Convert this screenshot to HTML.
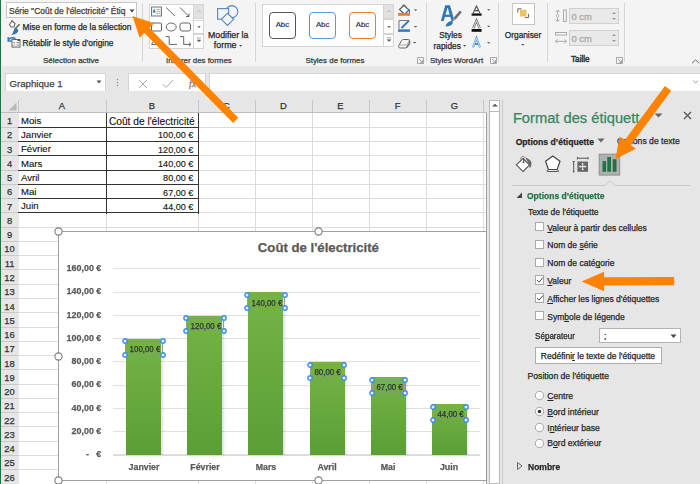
<!DOCTYPE html>
<html><head><meta charset="utf-8">
<style>
*{box-sizing:border-box;margin:0;padding:0}
html,body{width:700px;height:484px;overflow:hidden;background:#fff}
body{position:relative;font-family:"Liberation Sans",sans-serif;color:#262626}
.a{position:absolute}
.t{position:absolute;white-space:nowrap;line-height:1;-webkit-text-stroke:0.25px currentColor}
svg{position:absolute;overflow:visible}
</style></head><body>
<div class="a" style="left:0.00px;top:0.00px;width:700.00px;height:66.00px;background:#f5f4f5"></div>
<div class="a" style="left:0.00px;top:66.00px;width:700.00px;height:34.00px;background:#e6e6e6"></div>
<div class="a" style="left:0.00px;top:0.00px;width:1.00px;height:484.00px;background:#217346"></div>
<div class="a" style="left:6.20px;top:2.20px;width:130.50px;height:16.20px;background:#fff;border:1px solid #c6c6c6"></div>
<div class="a" style="left:8px;top:3px;width:118.5px;height:14px;overflow:hidden">
<div class="t" style="left:1.00px;top:3.82px;font-size:8.47px;color:#4a3a2a;font-weight:400;">Série "Coût de l'électricité" Étiq</div>
</div>
<svg style="left:128.5px;top:8.5px" width="6" height="4"><path d="M0.5 0.5h5l-2.5 3z" fill="#444"/></svg>
<div class="t" style="left:22.50px;top:23.08px;font-size:8.4px;color:#262626;font-weight:400;">Mise en forme de la sélection</div>
<div class="t" style="left:22.50px;top:39.48px;font-size:8.4px;color:#262626;font-weight:400;">Rétablir le style d'origine</div>
<div class="t" style="left:43.00px;top:56.50px;font-size:8.0px;color:#3a3a3a;font-weight:400;">Sélection active</div>
<svg style="left:5px;top:18px" width="20" height="32">
<path d="M4.5 6.5 L7 3 L10 5.5 L9 9 L6 9 Z" fill="#fff" stroke="#666" stroke-width="1.1"/><path d="M7 3 v-1" stroke="#666"/>
<path d="M14.6 6.3 L9.5 11.5" stroke="#666" stroke-width="1.6"/>
<path d="M11 10 q4 2 1 5 q-3 2 -6 2 q2 -1 2 -3 q1 -3 3 -4z" fill="#2e75b6"/>
<path d="M3.5 21.5 q3 -3 7 -1" fill="none" stroke="#2e75b6" stroke-width="1.5"/><path d="M3.2 19 v4 h3.5" fill="none" stroke="#2e75b6" stroke-width="1.4"/>
<rect x="7" y="21.5" width="8" height="7.6" fill="#f6f6f6" stroke="#666" stroke-width="1"/>
<rect x="12.5" y="21" width="2.5" height="2" fill="#555"/>
<path d="M8.5 24.5 h1.5 M11.5 24.5 h2.5 M8.5 27 h1.5 M11.5 27 h2.5" stroke="#777" stroke-width="0.9"/>
</svg>
<div class="a" style="left:142.00px;top:3.00px;width:1.00px;height:59.00px;background:#d6d6d6"></div>
<div class="a" style="left:255.00px;top:3.00px;width:1.00px;height:59.00px;background:#d6d6d6"></div>
<div class="a" style="left:426.00px;top:3.00px;width:1.00px;height:59.00px;background:#d6d6d6"></div>
<div class="a" style="left:498.00px;top:3.00px;width:1.00px;height:59.00px;background:#d6d6d6"></div>
<div class="a" style="left:547.00px;top:3.00px;width:1.00px;height:59.00px;background:#d6d6d6"></div>
<div class="a" style="left:624.00px;top:3.00px;width:1.00px;height:59.00px;background:#d6d6d6"></div>
<div class="a" style="left:149.00px;top:4.30px;width:55.00px;height:44.60px;background:#fff;border:1px solid #d4d4d4"></div>
<div class="a" style="left:193.40px;top:4.30px;width:10.60px;height:15.20px;background:#e1e1e1;border:1px solid #d4d4d4"></div>
<div class="a" style="left:193.40px;top:19.50px;width:10.60px;height:14.50px;background:#fff;border:1px solid #d4d4d4"></div>
<div class="a" style="left:193.40px;top:34.00px;width:10.60px;height:14.90px;background:#fff;border:1px solid #d4d4d4"></div>
<svg style="left:149px;top:4px" width="55" height="45">
<rect x="2.5" y="3" width="10" height="9" fill="#f4f4f4" stroke="#777"/><path d="M7.5 7.5h4M7.5 9.5h4M7.5 5.5h4" stroke="#aaa" stroke-width="0.8"/><path d="M3.6 8.5 l1.5-4 1.5 4z" fill="#2e75b6"/>
<path d="M17 3.5 L26 12" stroke="#666"/>
<path d="M31 3.5 L40 12.5 M40 12.5 v-3 M40 12.5 h-3" fill="none" stroke="#666"/>
<rect x="2.5" y="19" width="10" height="8" rx="1" fill="#fff" stroke="#666"/>
<ellipse cx="22.2" cy="23" rx="5" ry="4" fill="#fff" stroke="#666"/>
<rect x="31" y="19" width="10.5" height="8" rx="2" fill="#fff" stroke="#666"/>
<path d="M2.5 40.5 L6.5 34 L10 40.5 Z" fill="none" stroke="#666"/>
<path d="M16.6 32.6 h3.6 v7.8 h7.8" fill="none" stroke="#666"/>
<path d="M31 32.6 h3.7 v7.8 h7 M40 38.6 l2 1.8 -2 1.8" fill="none" stroke="#666"/>
</svg>
<svg style="left:194px;top:4px" width="10" height="44"><path d="M3.2 8.2 l1.8 -1.8 1.8 1.8" fill="none" stroke="#aaa" stroke-width="0.8"/><path d="M3.2 22.3 h3.6 l-1.8 1.6z" fill="#555"/><path d="M3 34 h4 M3.2 36 h3.6 l-1.8 1.8z" fill="#555" stroke="#666" stroke-width="0.6"/></svg>
<svg style="left:214px;top:4px" width="26" height="24">
<circle cx="17.8" cy="7.6" r="6" fill="#f3f3f3" stroke="#4f86c9" stroke-width="1.1"/>
<rect x="3.6" y="4.6" width="11" height="10.6" fill="#f3f3f3" stroke="#4f86c9" stroke-width="1.1"/>
<path d="M13.5 9.2 L19.6 15.3 L13.5 21.4 L7.4 15.3 Z" fill="#f3f3f3" stroke="#4f86c9" stroke-width="1.1"/>
</svg>
<div class="t" style="left:208.00px;top:30.70px;font-size:8.75px;color:#262626;font-weight:400;">Modifier la</div>
<div class="t" style="left:213.80px;top:41.28px;font-size:8.9px;color:#262626;font-weight:400;">forme</div>
<svg style="left:239px;top:45px" width="4" height="3"><path d="M0 0h3.4l-1.7 1.7z" fill="#555"/></svg>
<div class="t" style="left:166.00px;top:56.88px;font-size:7.9px;color:#3a3a3a;font-weight:400;">Insérer des formes</div>
<div class="a" style="left:262.40px;top:4.30px;width:121.50px;height:42.30px;background:#fff;border:1px solid #d4d4d4"></div>
<div class="a" style="left:268.90px;top:12.30px;width:27.00px;height:26.80px;border:1.6px solid #555;border-radius:4px;background:#fff"></div>
<div class="t" style="left:268.90px;top:20.70px;width:27px;text-align:center;font-size:7.8px;color:#333;-webkit-text-stroke:0.2px #333">Abc</div>
<div class="a" style="left:309.10px;top:12.30px;width:27.00px;height:26.80px;border:1px solid #5b9bd5;border-radius:4px;background:#fff"></div>
<div class="t" style="left:309.10px;top:20.70px;width:27px;text-align:center;font-size:7.8px;color:#333;-webkit-text-stroke:0.2px #333">Abc</div>
<div class="a" style="left:349.00px;top:12.30px;width:27.00px;height:26.80px;border:1px solid #ed7d31;border-radius:4px;background:#fff"></div>
<div class="t" style="left:349.00px;top:20.70px;width:27px;text-align:center;font-size:7.8px;color:#333;-webkit-text-stroke:0.2px #333">Abc</div>
<div class="a" style="left:383.40px;top:4.30px;width:10.40px;height:15.20px;background:#e1e1e1;border:1px solid #d4d4d4"></div>
<div class="a" style="left:383.40px;top:19.30px;width:10.40px;height:14.40px;background:#fff;border:1px solid #d4d4d4"></div>
<div class="a" style="left:383.40px;top:33.50px;width:10.40px;height:13.10px;background:#fff;border:1px solid #d4d4d4"></div>
<svg style="left:384px;top:4px" width="10" height="44"><path d="M3.2 8.2 l1.8 -1.8 1.8 1.8" fill="none" stroke="#aaa" stroke-width="0.8"/><path d="M3.2 22.3 h3.6 l-1.8 1.6z" fill="#555"/><path d="M3 33.8 h4 M3.2 35.7 h3.6 l-1.8 1.8z" fill="#555" stroke="#666" stroke-width="0.6"/></svg>
<svg style="left:396px;top:3px" width="24" height="46">
<path d="M3.5 6.5 L8 2.5 L13 7 L8.5 11.2 Z" fill="#fff" stroke="#555" stroke-width="1.1"/><path d="M6 4 q0 -3 3 -2 l1 2" fill="none" stroke="#777" stroke-width="0.9"/>
<path d="M12.5 5.5 q2.5 1.5 1.2 5 q-1.5 -1 -1.2 -5z" fill="#2e75b6"/>
<rect x="2" y="10" width="12" height="2.8" fill="#ed7d31"/>
<path d="M17.8 6.5 h3.6 l-1.8 1.6z" fill="#555"/>
<path d="M3 26 v-8.5 h9" fill="none" stroke="#777" stroke-width="1"/><path d="M5.5 25 L12.5 18.2" stroke="#2e75b6" stroke-width="1.8"/><path d="M12 17 l1.5 1.5" stroke="#555" stroke-width="1"/>
<rect x="2" y="26.4" width="12" height="2.4" fill="#2e75b6"/>
<path d="M17.8 23 h3.6 l-1.8 1.6z" fill="#555"/>
<path d="M2.8 42.5 L5.6 37.6 q0.7 -1.1 2 -1.1 h5 q1.2 0 0.9 1.1 v3 l-2.6 3.6 q-0.6 0.8 -1.6 0.8 h-5 q-1.6 0 -1.8 -1.4z" fill="#f6f6f6" stroke="#666" stroke-width="1"/><path d="M10.6 44.4 L13.5 40.6 V37.5" fill="none" stroke="#777" stroke-width="1.6"/><path d="M3.2 42 h7.4 l2.8 -4" fill="none" stroke="#888" stroke-width="0.7"/>
<path d="M16.8 39 h3.6 l-1.8 1.6z" fill="#555"/>
</svg>
<div class="t" style="left:305.40px;top:56.54px;font-size:7.95px;color:#3a3a3a;font-weight:400;">Styles de formes</div>
<svg style="left:417px;top:57px" width="7" height="7"><path d="M0.5 0.5h6v6h-6z M2 2 L5.5 5.5 M5.5 3v2.5h-2.5" fill="none" stroke="#888" stroke-width="0.7"/></svg>
<svg style="left:440px;top:5px" width="24" height="24">
<path d="M2.3 16 L6.3 1.6 h2.6 L13 16" fill="none" stroke="#2e75b6" stroke-width="2.8" stroke-linejoin="miter"/>
<path d="M4.6 10.8 h6" stroke="#2e75b6" stroke-width="2.2"/>
<path d="M20.8 6.3 L14.5 13.8" stroke="#707070" stroke-width="2.6"/>
<path d="M14.5 13.8 L12.8 15.8" stroke="#999" stroke-width="1.6"/>
<path d="M5.5 21.3 q1 -4.5 6.5 -5.5 q2 2 -1 4.5 q-2.5 1.5 -5.5 1z" fill="#2e75b6"/>
</svg>
<div class="t" style="left:439.20px;top:31.26px;font-size:8.3px;color:#262626;font-weight:400;">Styles</div>
<div class="t" style="left:433.60px;top:42.36px;font-size:8.3px;color:#262626;font-weight:400;">rapides</div>
<svg style="left:463px;top:45.3px" width="4" height="3"><path d="M0 0h3.4l-1.7 1.7z" fill="#555"/></svg>
<svg style="left:469px;top:5px" width="25" height="45">
<path d="M4.2 8 L7.5 1 L10.8 8 M5.4 5.6 h4.2" fill="none" stroke="#505050" stroke-width="1.1"/>
<rect x="2.6" y="8.4" width="10" height="2.3" fill="#111"/>
<path d="M4.2 23.3 L7.5 15.6 L10.8 23.3" fill="none" stroke="#666" stroke-width="2.2"/><path d="M4.2 23.3 L7.5 15.6 L10.8 23.3" fill="none" stroke="#fff" stroke-width="0.8"/>
<rect x="2.6" y="24" width="10" height="2.8" fill="#111"/>
<path d="M4 42.3 L7.5 33 L11 42.3 M5.5 39 h4" fill="none" stroke="#4a90d9" stroke-width="2"/><path d="M4 42.3 L7.5 33 L11 42.3" fill="none" stroke="#fff" stroke-width="0.7"/>
<path d="M18 4.2 h3.4 l-1.7 1.5z" fill="#555"/>
<path d="M18 20.8 h3.4 l-1.7 1.5z" fill="#555"/>
<path d="M18 37.3 h3.4 l-1.7 1.5z" fill="#555"/>
</svg>
<div class="t" style="left:430.00px;top:56.50px;font-size:8.0px;color:#3a3a3a;font-weight:400;">Styles WordArt</div>
<svg style="left:490px;top:57px" width="7" height="7"><path d="M0.5 0.5h6v6h-6z M2 2 L5.5 5.5 M5.5 3v2.5h-2.5" fill="none" stroke="#888" stroke-width="0.7"/></svg>
<div class="a" style="left:512.00px;top:3.00px;width:22.60px;height:22.00px;background:#fff;border:1px solid #c6c6c6"></div>
<svg style="left:512px;top:3px" width="23" height="22">
<path d="M5.8 9.6 V5.8 H9.6 M16.6 10.8 V14.6 H12.8" fill="none" stroke="#666" stroke-width="1"/>
<rect x="8" y="6.8" width="6.4" height="6.7" fill="#f0bf5e"/>
</svg>
<div class="t" style="left:504.80px;top:30.56px;font-size:8.3px;color:#262626;font-weight:400;">Organiser</div>
<svg style="left:521.2px;top:43.6px" width="4" height="3"><path d="M0 0h3.6l-1.8 1.6z" fill="#444"/></svg>
<svg style="left:554px;top:8px" width="14" height="40">
<path d="M3.6 2 v11.5 M1.6 4 L3.6 2 5.6 4 M1.6 11.5 L3.6 13.5 5.6 11.5" fill="none" stroke="#aaa" stroke-width="1"/>
<ellipse cx="3.6" cy="7.8" rx="1.2" ry="1.7" fill="#f3f3f3" stroke="#aaa" stroke-width="0.7"/>
<rect x="9.5" y="2" width="2.8" height="11.4" fill="none" stroke="#aaa"/>
<rect x="1.5" y="24.5" width="11" height="2.6" fill="none" stroke="#aaa"/>
<path d="M1.5 33.3 h11 M3.5 31.3 L1.5 33.3 3.5 35.3 M10.5 31.3 L12.5 33.3 10.5 35.3" fill="none" stroke="#aaa"/>
</svg>
<div class="a" style="left:569.00px;top:8.00px;width:50.40px;height:16.00px;background:#e9e9e9;border:1px solid #d0d0d0"></div>
<div class="t" style="left:571.50px;top:11.98px;font-size:9.4px;color:#a6a6a6;font-weight:400;">0 cm</div>
<svg style="left:611px;top:11px" width="6" height="10"><path d="M1 3 l2-2 2 2z M1 7 h4 l-2 2z" fill="#999"/></svg>
<div class="a" style="left:569.00px;top:30.00px;width:50.40px;height:16.00px;background:#e9e9e9;border:1px solid #d0d0d0"></div>
<div class="t" style="left:571.50px;top:33.98px;font-size:9.4px;color:#a6a6a6;font-weight:400;">0 cm</div>
<svg style="left:611px;top:33px" width="6" height="10"><path d="M1 3 l2-2 2 2z M1 7 h4 l-2 2z" fill="#999"/></svg>
<div class="t" style="left:571.00px;top:56.44px;font-size:8.2px;color:#333;font-weight:400;-webkit-text-stroke:0.45px #333">Taille</div>
<svg style="left:616px;top:57px" width="7" height="7"><path d="M0.5 0.5h6v6h-6z M2 2 L5.5 5.5 M5.5 3v2.5h-2.5" fill="none" stroke="#888" stroke-width="0.7"/></svg>
<svg style="left:691px;top:59px" width="9" height="5"><path d="M1 4.3 L4.6 0.8 L8.2 4.3" fill="none" stroke="#555" stroke-width="0.9"/></svg>
<div class="a" style="left:4.80px;top:73.30px;width:101.60px;height:18.30px;background:#fff;border:1px solid #d4d4d4"></div>
<div class="t" style="left:9.40px;top:78.84px;font-size:9.7px;color:#444;font-weight:400;">Graphique 1</div>
<svg style="left:96px;top:80px" width="6" height="4"><path d="M0.5 0.5h5l-2.5 3z" fill="#555"/></svg>
<svg style="left:116px;top:78px" width="3" height="10"><circle cx="1.5" cy="1.5" r="0.7" fill="#888"/><circle cx="1.5" cy="4.5" r="0.7" fill="#888"/><circle cx="1.5" cy="7.5" r="0.7" fill="#888"/></svg>
<div class="a" style="left:128.30px;top:73.30px;width:77.70px;height:18.30px;background:#fff;border:1px solid #d4d4d4"></div>
<div class="a" style="left:209.10px;top:73.30px;width:491.00px;height:18.30px;background:#fff;border:1px solid #d4d4d4;border-right:none"></div>
<svg style="left:137.5px;top:79px" width="70" height="12"><path d="M1 1 L9 9 M9 1 L1 9" stroke="#aaa" stroke-width="1"/><path d="M25 5 l3 3.5 L35 1" fill="none" stroke="#aaa" stroke-width="1"/></svg>
<div class="t" style="left:189.00px;top:78.50px;font-size:10px;color:#777;font-weight:400;font-family:'Liberation Serif'"><i>fx</i></div>
<svg style="left:692.8px;top:80.2px" width="6" height="4"><path d="M0.5 0.5 L2.6 3.2 L4.7 0.5" fill="none" stroke="#999" stroke-width="0.9"/></svg>
<div class="a" style="left:1.00px;top:91.00px;width:502.00px;height:393.00px;background:#e6e6e6"></div>
<div class="a" style="left:18.50px;top:113.00px;width:468.00px;height:371.00px;background:#fff"></div>
<div class="a" style="left:18.00px;top:100.00px;width:1.00px;height:13.00px;background:#c8c8c8"></div>
<div class="a" style="left:106.00px;top:100.00px;width:1.00px;height:13.00px;background:#c8c8c8"></div>
<div class="a" style="left:198.00px;top:100.00px;width:1.00px;height:13.00px;background:#c8c8c8"></div>
<div class="a" style="left:255.00px;top:100.00px;width:1.00px;height:13.00px;background:#c8c8c8"></div>
<div class="a" style="left:312.00px;top:100.00px;width:1.00px;height:13.00px;background:#c8c8c8"></div>
<div class="a" style="left:369.00px;top:100.00px;width:1.00px;height:13.00px;background:#c8c8c8"></div>
<div class="a" style="left:426.00px;top:100.00px;width:1.00px;height:13.00px;background:#c8c8c8"></div>
<div class="a" style="left:483.00px;top:100.00px;width:1.00px;height:13.00px;background:#c8c8c8"></div>
<div class="a" style="left:1.00px;top:112.40px;width:486.00px;height:1.00px;background:#bdbdbd"></div>
<div class="a" style="left:18.00px;top:126.77px;width:468.30px;height:1.00px;background:#dcdcdc"></div>
<div class="a" style="left:1.00px;top:126.77px;width:17.00px;height:1.00px;background:#c8c8c8"></div>
<div class="a" style="left:18.00px;top:141.04px;width:468.30px;height:1.00px;background:#dcdcdc"></div>
<div class="a" style="left:1.00px;top:141.04px;width:17.00px;height:1.00px;background:#c8c8c8"></div>
<div class="a" style="left:18.00px;top:155.31px;width:468.30px;height:1.00px;background:#dcdcdc"></div>
<div class="a" style="left:1.00px;top:155.31px;width:17.00px;height:1.00px;background:#c8c8c8"></div>
<div class="a" style="left:18.00px;top:169.58px;width:468.30px;height:1.00px;background:#dcdcdc"></div>
<div class="a" style="left:1.00px;top:169.58px;width:17.00px;height:1.00px;background:#c8c8c8"></div>
<div class="a" style="left:18.00px;top:183.85px;width:468.30px;height:1.00px;background:#dcdcdc"></div>
<div class="a" style="left:1.00px;top:183.85px;width:17.00px;height:1.00px;background:#c8c8c8"></div>
<div class="a" style="left:18.00px;top:198.12px;width:468.30px;height:1.00px;background:#dcdcdc"></div>
<div class="a" style="left:1.00px;top:198.12px;width:17.00px;height:1.00px;background:#c8c8c8"></div>
<div class="a" style="left:18.00px;top:212.39px;width:468.30px;height:1.00px;background:#dcdcdc"></div>
<div class="a" style="left:1.00px;top:212.39px;width:17.00px;height:1.00px;background:#c8c8c8"></div>
<div class="a" style="left:18.00px;top:226.66px;width:468.30px;height:1.00px;background:#dcdcdc"></div>
<div class="a" style="left:1.00px;top:226.66px;width:17.00px;height:1.00px;background:#c8c8c8"></div>
<div class="a" style="left:18.00px;top:240.93px;width:468.30px;height:1.00px;background:#dcdcdc"></div>
<div class="a" style="left:1.00px;top:240.93px;width:17.00px;height:1.00px;background:#c8c8c8"></div>
<div class="a" style="left:18.00px;top:255.20px;width:468.30px;height:1.00px;background:#dcdcdc"></div>
<div class="a" style="left:1.00px;top:255.20px;width:17.00px;height:1.00px;background:#c8c8c8"></div>
<div class="a" style="left:18.00px;top:269.47px;width:468.30px;height:1.00px;background:#dcdcdc"></div>
<div class="a" style="left:1.00px;top:269.47px;width:17.00px;height:1.00px;background:#c8c8c8"></div>
<div class="a" style="left:18.00px;top:283.74px;width:468.30px;height:1.00px;background:#dcdcdc"></div>
<div class="a" style="left:1.00px;top:283.74px;width:17.00px;height:1.00px;background:#c8c8c8"></div>
<div class="a" style="left:18.00px;top:298.01px;width:468.30px;height:1.00px;background:#dcdcdc"></div>
<div class="a" style="left:1.00px;top:298.01px;width:17.00px;height:1.00px;background:#c8c8c8"></div>
<div class="a" style="left:18.00px;top:312.28px;width:468.30px;height:1.00px;background:#dcdcdc"></div>
<div class="a" style="left:1.00px;top:312.28px;width:17.00px;height:1.00px;background:#c8c8c8"></div>
<div class="a" style="left:18.00px;top:326.55px;width:468.30px;height:1.00px;background:#dcdcdc"></div>
<div class="a" style="left:1.00px;top:326.55px;width:17.00px;height:1.00px;background:#c8c8c8"></div>
<div class="a" style="left:18.00px;top:340.82px;width:468.30px;height:1.00px;background:#dcdcdc"></div>
<div class="a" style="left:1.00px;top:340.82px;width:17.00px;height:1.00px;background:#c8c8c8"></div>
<div class="a" style="left:18.00px;top:355.09px;width:468.30px;height:1.00px;background:#dcdcdc"></div>
<div class="a" style="left:1.00px;top:355.09px;width:17.00px;height:1.00px;background:#c8c8c8"></div>
<div class="a" style="left:18.00px;top:369.36px;width:468.30px;height:1.00px;background:#dcdcdc"></div>
<div class="a" style="left:1.00px;top:369.36px;width:17.00px;height:1.00px;background:#c8c8c8"></div>
<div class="a" style="left:18.00px;top:383.63px;width:468.30px;height:1.00px;background:#dcdcdc"></div>
<div class="a" style="left:1.00px;top:383.63px;width:17.00px;height:1.00px;background:#c8c8c8"></div>
<div class="a" style="left:18.00px;top:397.90px;width:468.30px;height:1.00px;background:#dcdcdc"></div>
<div class="a" style="left:1.00px;top:397.90px;width:17.00px;height:1.00px;background:#c8c8c8"></div>
<div class="a" style="left:18.00px;top:412.17px;width:468.30px;height:1.00px;background:#dcdcdc"></div>
<div class="a" style="left:1.00px;top:412.17px;width:17.00px;height:1.00px;background:#c8c8c8"></div>
<div class="a" style="left:18.00px;top:426.44px;width:468.30px;height:1.00px;background:#dcdcdc"></div>
<div class="a" style="left:1.00px;top:426.44px;width:17.00px;height:1.00px;background:#c8c8c8"></div>
<div class="a" style="left:18.00px;top:440.71px;width:468.30px;height:1.00px;background:#dcdcdc"></div>
<div class="a" style="left:1.00px;top:440.71px;width:17.00px;height:1.00px;background:#c8c8c8"></div>
<div class="a" style="left:18.00px;top:454.98px;width:468.30px;height:1.00px;background:#dcdcdc"></div>
<div class="a" style="left:1.00px;top:454.98px;width:17.00px;height:1.00px;background:#c8c8c8"></div>
<div class="a" style="left:18.00px;top:469.25px;width:468.30px;height:1.00px;background:#dcdcdc"></div>
<div class="a" style="left:1.00px;top:469.25px;width:17.00px;height:1.00px;background:#c8c8c8"></div>
<div class="a" style="left:18.00px;top:483.52px;width:468.30px;height:1.00px;background:#dcdcdc"></div>
<div class="a" style="left:1.00px;top:483.52px;width:17.00px;height:1.00px;background:#c8c8c8"></div>
<div class="a" style="left:106.00px;top:113.00px;width:1.00px;height:371.00px;background:#dcdcdc"></div>
<div class="a" style="left:198.00px;top:113.00px;width:1.00px;height:371.00px;background:#dcdcdc"></div>
<div class="a" style="left:255.00px;top:113.00px;width:1.00px;height:371.00px;background:#dcdcdc"></div>
<div class="a" style="left:312.00px;top:113.00px;width:1.00px;height:371.00px;background:#dcdcdc"></div>
<div class="a" style="left:369.00px;top:113.00px;width:1.00px;height:371.00px;background:#dcdcdc"></div>
<div class="a" style="left:426.00px;top:113.00px;width:1.00px;height:371.00px;background:#dcdcdc"></div>
<div class="a" style="left:483.00px;top:113.00px;width:1.00px;height:371.00px;background:#dcdcdc"></div>
<div class="a" style="left:486.30px;top:113.00px;width:1.00px;height:371.00px;background:#9e9e9e"></div>
<div class="t" style="left:52.00px;top:101.20px;width:20px;text-align:center;font-size:9.4px;color:#333">A</div>
<div class="t" style="left:142.00px;top:101.20px;width:20px;text-align:center;font-size:9.4px;color:#333">B</div>
<div class="t" style="left:216.50px;top:101.20px;width:20px;text-align:center;font-size:9.4px;color:#333">C</div>
<div class="t" style="left:273.50px;top:101.20px;width:20px;text-align:center;font-size:9.4px;color:#333">D</div>
<div class="t" style="left:330.50px;top:101.20px;width:20px;text-align:center;font-size:9.4px;color:#333">E</div>
<div class="t" style="left:387.50px;top:101.20px;width:20px;text-align:center;font-size:9.4px;color:#333">F</div>
<div class="t" style="left:444.50px;top:101.20px;width:20px;text-align:center;font-size:9.4px;color:#333">G</div>
<div class="t" style="left:1px;top:116.00px;width:17px;text-align:center;font-size:9.4px;color:#333">1</div>
<div class="t" style="left:1px;top:130.27px;width:17px;text-align:center;font-size:9.4px;color:#333">2</div>
<div class="t" style="left:1px;top:144.54px;width:17px;text-align:center;font-size:9.4px;color:#333">3</div>
<div class="t" style="left:1px;top:158.81px;width:17px;text-align:center;font-size:9.4px;color:#333">4</div>
<div class="t" style="left:1px;top:173.08px;width:17px;text-align:center;font-size:9.4px;color:#333">5</div>
<div class="t" style="left:1px;top:187.35px;width:17px;text-align:center;font-size:9.4px;color:#333">6</div>
<div class="t" style="left:1px;top:201.62px;width:17px;text-align:center;font-size:9.4px;color:#333">7</div>
<div class="t" style="left:1px;top:215.89px;width:17px;text-align:center;font-size:9.4px;color:#333">8</div>
<div class="t" style="left:1px;top:230.16px;width:17px;text-align:center;font-size:9.4px;color:#333">9</div>
<div class="t" style="left:1px;top:244.43px;width:17px;text-align:center;font-size:9.4px;color:#333">10</div>
<div class="t" style="left:1px;top:258.70px;width:17px;text-align:center;font-size:9.4px;color:#333">11</div>
<div class="t" style="left:1px;top:272.97px;width:17px;text-align:center;font-size:9.4px;color:#333">12</div>
<div class="t" style="left:1px;top:287.24px;width:17px;text-align:center;font-size:9.4px;color:#333">13</div>
<div class="t" style="left:1px;top:301.51px;width:17px;text-align:center;font-size:9.4px;color:#333">14</div>
<div class="t" style="left:1px;top:315.78px;width:17px;text-align:center;font-size:9.4px;color:#333">15</div>
<div class="t" style="left:1px;top:330.05px;width:17px;text-align:center;font-size:9.4px;color:#333">16</div>
<div class="t" style="left:1px;top:344.32px;width:17px;text-align:center;font-size:9.4px;color:#333">17</div>
<div class="t" style="left:1px;top:358.59px;width:17px;text-align:center;font-size:9.4px;color:#333">18</div>
<div class="t" style="left:1px;top:372.86px;width:17px;text-align:center;font-size:9.4px;color:#333">19</div>
<div class="t" style="left:1px;top:387.13px;width:17px;text-align:center;font-size:9.4px;color:#333">20</div>
<div class="t" style="left:1px;top:401.40px;width:17px;text-align:center;font-size:9.4px;color:#333">21</div>
<div class="t" style="left:1px;top:415.67px;width:17px;text-align:center;font-size:9.4px;color:#333">22</div>
<div class="t" style="left:1px;top:429.94px;width:17px;text-align:center;font-size:9.4px;color:#333">23</div>
<div class="t" style="left:1px;top:444.21px;width:17px;text-align:center;font-size:9.4px;color:#333">24</div>
<div class="t" style="left:1px;top:458.48px;width:17px;text-align:center;font-size:9.4px;color:#333">25</div>
<div class="t" style="left:1px;top:472.75px;width:17px;text-align:center;font-size:9.4px;color:#333">26</div>
<svg style="left:8px;top:102px" width="10" height="9"><path d="M0.5 8.5 L8.5 0.5 V8.5 Z" fill="#b8b8b8"/></svg>
<div class="t" style="left:21.00px;top:115.82px;font-size:9.6px;color:#111;font-weight:400;-webkit-text-stroke:0.12px #111">Mois</div>
<div class="t" style="left:108.90px;top:116.54px;font-size:10.2px;color:#111;font-weight:400;-webkit-text-stroke:0.12px #111">Coût de l'électricité</div>
<div class="t" style="left:21.00px;top:130.09px;font-size:9.6px;color:#111;font-weight:400;-webkit-text-stroke:0.12px #111">Janvier</div>
<div class="t" style="left:120px;top:131.47px;width:73.3px;text-align:right;font-size:9.05px;color:#111;-webkit-text-stroke:0.12px #111">100,00 €</div>
<div class="t" style="left:21.00px;top:144.36px;font-size:9.6px;color:#111;font-weight:400;-webkit-text-stroke:0.12px #111">Février</div>
<div class="t" style="left:120px;top:145.74px;width:73.3px;text-align:right;font-size:9.05px;color:#111;-webkit-text-stroke:0.12px #111">120,00 €</div>
<div class="t" style="left:21.00px;top:158.63px;font-size:9.6px;color:#111;font-weight:400;-webkit-text-stroke:0.12px #111">Mars</div>
<div class="t" style="left:120px;top:160.01px;width:73.3px;text-align:right;font-size:9.05px;color:#111;-webkit-text-stroke:0.12px #111">140,00 €</div>
<div class="t" style="left:21.00px;top:172.90px;font-size:9.6px;color:#111;font-weight:400;-webkit-text-stroke:0.12px #111">Avril</div>
<div class="t" style="left:120px;top:174.28px;width:73.3px;text-align:right;font-size:9.05px;color:#111;-webkit-text-stroke:0.12px #111">80,00 €</div>
<div class="t" style="left:21.00px;top:187.17px;font-size:9.6px;color:#111;font-weight:400;-webkit-text-stroke:0.12px #111">Mai</div>
<div class="t" style="left:120px;top:188.55px;width:73.3px;text-align:right;font-size:9.05px;color:#111;-webkit-text-stroke:0.12px #111">67,00 €</div>
<div class="t" style="left:21.00px;top:201.44px;font-size:9.6px;color:#111;font-weight:400;-webkit-text-stroke:0.12px #111">Juin</div>
<div class="t" style="left:120px;top:202.82px;width:73.3px;text-align:right;font-size:9.05px;color:#111;-webkit-text-stroke:0.12px #111">44,00 €</div>
<div class="a" style="left:18.00px;top:126.77px;width:181.00px;height:1.00px;background:#333"></div>
<div class="a" style="left:18.00px;top:141.04px;width:181.00px;height:1.00px;background:#333"></div>
<div class="a" style="left:18.00px;top:155.31px;width:181.00px;height:1.00px;background:#333"></div>
<div class="a" style="left:18.00px;top:169.58px;width:181.00px;height:1.00px;background:#333"></div>
<div class="a" style="left:18.00px;top:183.85px;width:181.00px;height:1.00px;background:#333"></div>
<div class="a" style="left:18.00px;top:198.12px;width:181.00px;height:1.00px;background:#333"></div>
<div class="a" style="left:18.00px;top:212.39px;width:181.00px;height:1.00px;background:#333"></div>
<div class="a" style="left:106.00px;top:113.00px;width:1.00px;height:100.89px;background:#333"></div>
<div class="a" style="left:198.00px;top:113.00px;width:1.00px;height:100.89px;background:#333"></div>
<div class="a" style="left:0;top:0;width:486.3px;height:484px;overflow:hidden">
<div class="a" style="left:58.00px;top:231.10px;width:500.00px;height:249.50px;background:#fff;border:1px solid #a0a0a0"></div>
<div class="t" style="left:257.80px;top:241.44px;font-size:13.2px;color:#595959;font-weight:700;">Coût de l'électricité</div>
<div class="a" style="left:113.30px;top:268.30px;width:366.40px;height:1.00px;background:#e0e0e0"></div>
<div class="t" style="left:50px;top:263.10px;width:51.3px;text-align:right;font-size:9.5px;font-weight:700;color:#595959;transform:scaleX(0.94);transform-origin:100% 0">160,00 €</div>
<div class="a" style="left:113.30px;top:291.57px;width:366.40px;height:1.00px;background:#e0e0e0"></div>
<div class="t" style="left:50px;top:286.37px;width:51.3px;text-align:right;font-size:9.5px;font-weight:700;color:#595959;transform:scaleX(0.94);transform-origin:100% 0">140,00 €</div>
<div class="a" style="left:113.30px;top:314.84px;width:366.40px;height:1.00px;background:#e0e0e0"></div>
<div class="t" style="left:50px;top:309.64px;width:51.3px;text-align:right;font-size:9.5px;font-weight:700;color:#595959;transform:scaleX(0.94);transform-origin:100% 0">120,00 €</div>
<div class="a" style="left:113.30px;top:338.11px;width:366.40px;height:1.00px;background:#e0e0e0"></div>
<div class="t" style="left:50px;top:332.91px;width:51.3px;text-align:right;font-size:9.5px;font-weight:700;color:#595959;transform:scaleX(0.94);transform-origin:100% 0">100,00 €</div>
<div class="a" style="left:113.30px;top:361.38px;width:366.40px;height:1.00px;background:#e0e0e0"></div>
<div class="t" style="left:50px;top:356.18px;width:51.3px;text-align:right;font-size:9.5px;font-weight:700;color:#595959;transform:scaleX(0.94);transform-origin:100% 0">80,00 €</div>
<div class="a" style="left:113.30px;top:384.65px;width:366.40px;height:1.00px;background:#e0e0e0"></div>
<div class="t" style="left:50px;top:379.45px;width:51.3px;text-align:right;font-size:9.5px;font-weight:700;color:#595959;transform:scaleX(0.94);transform-origin:100% 0">60,00 €</div>
<div class="a" style="left:113.30px;top:407.92px;width:366.40px;height:1.00px;background:#e0e0e0"></div>
<div class="t" style="left:50px;top:402.72px;width:51.3px;text-align:right;font-size:9.5px;font-weight:700;color:#595959;transform:scaleX(0.94);transform-origin:100% 0">40,00 €</div>
<div class="a" style="left:113.30px;top:431.19px;width:366.40px;height:1.00px;background:#e0e0e0"></div>
<div class="t" style="left:50px;top:425.99px;width:51.3px;text-align:right;font-size:9.5px;font-weight:700;color:#595959;transform:scaleX(0.94);transform-origin:100% 0">20,00 €</div>
<div class="a" style="left:113.30px;top:454.46px;width:366.40px;height:1.00px;background:#e0e0e0"></div>
<div class="t" style="left:50px;top:449.26px;width:51.3px;text-align:right;font-size:9.5px;font-weight:700;color:#595959;transform:scaleX(0.94);transform-origin:100% 0">-&nbsp;&nbsp;&nbsp;€</div>
<div class="a" style="left:127.83px;top:339.85px;width:35.00px;height:116.35px;background:rgba(0,0,0,0.12);filter:blur(1px)"></div>
<div class="a" style="left:126.33px;top:338.85px;width:35.00px;height:116.35px;background:linear-gradient(#74b447,#5a9e36)"></div>
<div class="t" style="left:113.83px;top:463.20px;width:60px;text-align:center;font-size:9.3px;font-weight:700;color:#595959;transform:scaleX(0.945);transform-origin:50% 0">Janvier</div>
<div class="a" style="left:124.88px;top:341.35px;width:37.90px;height:13.40px;border-top:1px dotted #8f8f8f;border-bottom:1px dotted #8f8f8f;border-left:1px solid #9a9a9a;border-right:1px solid #9a9a9a"></div>
<div class="t" style="left:120.88px;top:345.05px;width:47.90px;text-align:center;font-size:8.4px;color:#333;transform:scaleX(0.94);transform-origin:50% 0">100,00 €</div>
<svg style="left:121.88px;top:338.35px" width="6" height="6"><circle cx="3" cy="3" r="2.2" fill="#e3eefa" stroke="#3a8ee6" stroke-width="1.4"/></svg>
<svg style="left:159.78px;top:338.35px" width="6" height="6"><circle cx="3" cy="3" r="2.2" fill="#e3eefa" stroke="#3a8ee6" stroke-width="1.4"/></svg>
<svg style="left:121.88px;top:351.75px" width="6" height="6"><circle cx="3" cy="3" r="2.2" fill="#e3eefa" stroke="#3a8ee6" stroke-width="1.4"/></svg>
<svg style="left:159.78px;top:351.75px" width="6" height="6"><circle cx="3" cy="3" r="2.2" fill="#e3eefa" stroke="#3a8ee6" stroke-width="1.4"/></svg>
<div class="a" style="left:188.90px;top:316.58px;width:35.00px;height:139.62px;background:rgba(0,0,0,0.12);filter:blur(1px)"></div>
<div class="a" style="left:187.40px;top:315.58px;width:35.00px;height:139.62px;background:linear-gradient(#74b447,#5a9e36)"></div>
<div class="t" style="left:174.90px;top:463.20px;width:60px;text-align:center;font-size:9.3px;font-weight:700;color:#595959;transform:scaleX(0.945);transform-origin:50% 0">Février</div>
<div class="a" style="left:185.95px;top:318.08px;width:37.90px;height:13.40px;border-top:1px dotted #8f8f8f;border-bottom:1px dotted #8f8f8f;border-left:1px solid #9a9a9a;border-right:1px solid #9a9a9a"></div>
<div class="t" style="left:181.95px;top:321.78px;width:47.90px;text-align:center;font-size:8.4px;color:#333;transform:scaleX(0.94);transform-origin:50% 0">120,00 €</div>
<svg style="left:182.95px;top:315.08px" width="6" height="6"><circle cx="3" cy="3" r="2.2" fill="#e3eefa" stroke="#3a8ee6" stroke-width="1.4"/></svg>
<svg style="left:220.85px;top:315.08px" width="6" height="6"><circle cx="3" cy="3" r="2.2" fill="#e3eefa" stroke="#3a8ee6" stroke-width="1.4"/></svg>
<svg style="left:182.95px;top:328.48px" width="6" height="6"><circle cx="3" cy="3" r="2.2" fill="#e3eefa" stroke="#3a8ee6" stroke-width="1.4"/></svg>
<svg style="left:220.85px;top:328.48px" width="6" height="6"><circle cx="3" cy="3" r="2.2" fill="#e3eefa" stroke="#3a8ee6" stroke-width="1.4"/></svg>
<div class="a" style="left:249.97px;top:293.31px;width:35.00px;height:162.89px;background:rgba(0,0,0,0.12);filter:blur(1px)"></div>
<div class="a" style="left:248.47px;top:292.31px;width:35.00px;height:162.89px;background:linear-gradient(#74b447,#5a9e36)"></div>
<div class="t" style="left:235.97px;top:463.20px;width:60px;text-align:center;font-size:9.3px;font-weight:700;color:#595959;transform:scaleX(0.945);transform-origin:50% 0">Mars</div>
<div class="a" style="left:247.02px;top:294.81px;width:37.90px;height:13.40px;border-top:1px dotted #8f8f8f;border-bottom:1px dotted #8f8f8f;border-left:1px solid #9a9a9a;border-right:1px solid #9a9a9a"></div>
<div class="t" style="left:243.02px;top:298.51px;width:47.90px;text-align:center;font-size:8.4px;color:#333;transform:scaleX(0.94);transform-origin:50% 0">140,00 €</div>
<svg style="left:244.02px;top:291.81px" width="6" height="6"><circle cx="3" cy="3" r="2.2" fill="#e3eefa" stroke="#3a8ee6" stroke-width="1.4"/></svg>
<svg style="left:281.92px;top:291.81px" width="6" height="6"><circle cx="3" cy="3" r="2.2" fill="#e3eefa" stroke="#3a8ee6" stroke-width="1.4"/></svg>
<svg style="left:244.02px;top:305.21px" width="6" height="6"><circle cx="3" cy="3" r="2.2" fill="#e3eefa" stroke="#3a8ee6" stroke-width="1.4"/></svg>
<svg style="left:281.92px;top:305.21px" width="6" height="6"><circle cx="3" cy="3" r="2.2" fill="#e3eefa" stroke="#3a8ee6" stroke-width="1.4"/></svg>
<div class="a" style="left:311.03px;top:363.12px;width:35.00px;height:93.08px;background:rgba(0,0,0,0.12);filter:blur(1px)"></div>
<div class="a" style="left:309.53px;top:362.12px;width:35.00px;height:93.08px;background:linear-gradient(#74b447,#5a9e36)"></div>
<div class="t" style="left:297.03px;top:463.20px;width:60px;text-align:center;font-size:9.3px;font-weight:700;color:#595959;transform:scaleX(0.945);transform-origin:50% 0">Avril</div>
<div class="a" style="left:310.43px;top:364.62px;width:33.20px;height:13.40px;border-top:1px dotted #8f8f8f;border-bottom:1px dotted #8f8f8f;border-left:1px solid #9a9a9a;border-right:1px solid #9a9a9a"></div>
<div class="t" style="left:306.43px;top:368.32px;width:43.20px;text-align:center;font-size:8.4px;color:#333;transform:scaleX(0.94);transform-origin:50% 0">80,00 €</div>
<svg style="left:307.43px;top:361.62px" width="6" height="6"><circle cx="3" cy="3" r="2.2" fill="#e3eefa" stroke="#3a8ee6" stroke-width="1.4"/></svg>
<svg style="left:340.63px;top:361.62px" width="6" height="6"><circle cx="3" cy="3" r="2.2" fill="#e3eefa" stroke="#3a8ee6" stroke-width="1.4"/></svg>
<svg style="left:307.43px;top:375.02px" width="6" height="6"><circle cx="3" cy="3" r="2.2" fill="#e3eefa" stroke="#3a8ee6" stroke-width="1.4"/></svg>
<svg style="left:340.63px;top:375.02px" width="6" height="6"><circle cx="3" cy="3" r="2.2" fill="#e3eefa" stroke="#3a8ee6" stroke-width="1.4"/></svg>
<div class="a" style="left:372.10px;top:378.25px;width:35.00px;height:77.95px;background:rgba(0,0,0,0.12);filter:blur(1px)"></div>
<div class="a" style="left:370.60px;top:377.25px;width:35.00px;height:77.95px;background:linear-gradient(#74b447,#5a9e36)"></div>
<div class="t" style="left:358.10px;top:463.20px;width:60px;text-align:center;font-size:9.3px;font-weight:700;color:#595959;transform:scaleX(0.945);transform-origin:50% 0">Mai</div>
<div class="a" style="left:371.50px;top:379.75px;width:33.20px;height:13.40px;border-top:1px dotted #8f8f8f;border-bottom:1px dotted #8f8f8f;border-left:1px solid #9a9a9a;border-right:1px solid #9a9a9a"></div>
<div class="t" style="left:367.50px;top:383.45px;width:43.20px;text-align:center;font-size:8.4px;color:#333;transform:scaleX(0.94);transform-origin:50% 0">67,00 €</div>
<svg style="left:368.50px;top:376.75px" width="6" height="6"><circle cx="3" cy="3" r="2.2" fill="#e3eefa" stroke="#3a8ee6" stroke-width="1.4"/></svg>
<svg style="left:401.70px;top:376.75px" width="6" height="6"><circle cx="3" cy="3" r="2.2" fill="#e3eefa" stroke="#3a8ee6" stroke-width="1.4"/></svg>
<svg style="left:368.50px;top:390.15px" width="6" height="6"><circle cx="3" cy="3" r="2.2" fill="#e3eefa" stroke="#3a8ee6" stroke-width="1.4"/></svg>
<svg style="left:401.70px;top:390.15px" width="6" height="6"><circle cx="3" cy="3" r="2.2" fill="#e3eefa" stroke="#3a8ee6" stroke-width="1.4"/></svg>
<div class="a" style="left:433.17px;top:405.01px;width:35.00px;height:51.19px;background:rgba(0,0,0,0.12);filter:blur(1px)"></div>
<div class="a" style="left:431.67px;top:404.01px;width:35.00px;height:51.19px;background:linear-gradient(#74b447,#5a9e36)"></div>
<div class="t" style="left:419.17px;top:463.20px;width:60px;text-align:center;font-size:9.3px;font-weight:700;color:#595959;transform:scaleX(0.945);transform-origin:50% 0">Juin</div>
<div class="a" style="left:432.57px;top:406.51px;width:33.20px;height:13.40px;border-top:1px dotted #8f8f8f;border-bottom:1px dotted #8f8f8f;border-left:1px solid #9a9a9a;border-right:1px solid #9a9a9a"></div>
<div class="t" style="left:428.57px;top:410.21px;width:43.20px;text-align:center;font-size:8.4px;color:#333;transform:scaleX(0.94);transform-origin:50% 0">44,00 €</div>
<svg style="left:429.57px;top:403.51px" width="6" height="6"><circle cx="3" cy="3" r="2.2" fill="#e3eefa" stroke="#3a8ee6" stroke-width="1.4"/></svg>
<svg style="left:462.77px;top:403.51px" width="6" height="6"><circle cx="3" cy="3" r="2.2" fill="#e3eefa" stroke="#3a8ee6" stroke-width="1.4"/></svg>
<svg style="left:429.57px;top:416.91px" width="6" height="6"><circle cx="3" cy="3" r="2.2" fill="#e3eefa" stroke="#3a8ee6" stroke-width="1.4"/></svg>
<svg style="left:462.77px;top:416.91px" width="6" height="6"><circle cx="3" cy="3" r="2.2" fill="#e3eefa" stroke="#3a8ee6" stroke-width="1.4"/></svg>
<div class="a" style="left:113.30px;top:455.20px;width:366.40px;height:1.00px;background:#d9d9d9"></div>
<svg style="left:54.00px;top:227.10px" width="9" height="9"><circle cx="4.5" cy="4.5" r="3.6" fill="#fff" stroke="#7a7a7a" stroke-width="1.1"/></svg>
<svg style="left:313.90px;top:227.10px" width="9" height="9"><circle cx="4.5" cy="4.5" r="3.6" fill="#fff" stroke="#7a7a7a" stroke-width="1.1"/></svg>
<svg style="left:54.00px;top:351.50px" width="9" height="9"><circle cx="4.5" cy="4.5" r="3.6" fill="#fff" stroke="#7a7a7a" stroke-width="1.1"/></svg>
<svg style="left:54.00px;top:475.80px" width="9" height="9"><circle cx="4.5" cy="4.5" r="3.6" fill="#fff" stroke="#7a7a7a" stroke-width="1.1"/></svg>
<svg style="left:313.90px;top:475.80px" width="9" height="9"><circle cx="4.5" cy="4.5" r="3.6" fill="#fff" stroke="#7a7a7a" stroke-width="1.1"/></svg>
</div>
<div class="a" style="left:489.20px;top:100.20px;width:10.70px;height:384.00px;background:#fff;border:1px solid #b9b9b9"></div>
<div class="a" style="left:489.20px;top:110.90px;width:10.70px;height:1.00px;background:#b9b9b9"></div>
<svg style="left:491px;top:102.2px" width="8" height="6"><path d="M1 4.6 L4 1.8 L7 4.6Z" fill="#555"/></svg>
<div class="a" style="left:503.00px;top:91.00px;width:197.00px;height:393.00px;background:#e6e6e6"></div>
<div class="a" style="left:502.40px;top:100.00px;width:1.00px;height:384.00px;background:#c8c8c8"></div>
<div class="t" style="left:512.90px;top:111.04px;font-size:14.7px;color:#3a8460;font-weight:400;">Format des étiquett</div>
<svg style="left:654px;top:113px" width="9" height="6"><path d="M0.5 0.5 h8 l-4 4z" fill="#666"/></svg>
<svg style="left:683px;top:111px" width="9" height="9"><path d="M1 1 L8 8 M8 1 L1 8" stroke="#555" stroke-width="1.3"/></svg>
<div class="t" style="left:515.70px;top:137.52px;font-size:8.6px;color:#262626;font-weight:700;">Options d’étiquette</div>
<svg style="left:597px;top:138px" width="8" height="6"><path d="M0.5 0.5 h7 l-3.5 4z" fill="#666"/></svg>
<div class="t" style="left:617.00px;top:137.49px;font-size:8.64px;color:#262626;font-weight:400;">Options de texte</div>
<svg style="left:510px;top:148px" width="115" height="30">
<path d="M6.3 16.8 L13 10.6 L19.6 17 L13 23.4 Z" fill="#fff" stroke="#555" stroke-width="1.1"/><path d="M10.8 11.5 a2.3 2.3 0 0 1 4.2 -1.8" fill="none" stroke="#777" stroke-width="0.9"/><path d="M13.6 10 V14" stroke="#555" stroke-width="0.9"/><circle cx="13.6" cy="14.2" r="0.9" fill="#444"/><path d="M15 9.6 q5 1.2 6.5 5.2 q0.3 3 -1.8 5.8 q0.3 -3.5 -1.5 -6 z" fill="#666"/>
<path d="M42.8 8 L50 13.3 L47.2 21.5 H38.4 L35.6 13.3 Z" fill="#fff" stroke="#444" stroke-width="1.2"/><path d="M38 21.5 l-1 2.5 M47.6 21.5 l1 2.5 M38 23.5 h9.6" stroke="#555" stroke-width="1"/>
<rect x="67.4" y="13.5" width="10.6" height="10.3" fill="#666"/><path d="M72.7 15.3 v6.7 M69.3 18.6 h6.7" stroke="#fff" stroke-width="0.9"/><path d="M71.7 16.3 l1 -1 1 1 M71.7 21 l1 1 1 -1 M70.3 17.6 l-1 1 1 1 M75 17.6 l1 1 -1 1" fill="none" stroke="#fff" stroke-width="0.7"/>
<path d="M63.7 13.5 v10.3 M62.7 13.5 h2 M62.7 23.8 h2" stroke="#555" stroke-width="1"/>
<path d="M67.4 10.2 h10.6 M67.4 9 v2.4 M78 9 v2.4" stroke="#555" stroke-width="1"/>
<rect x="89.2" y="6.2" width="20.5" height="20.9" fill="#b0b0b0" stroke="#8f8f8f" stroke-width="1"/>
<rect x="92.5" y="13.1" width="3.6" height="10.7" fill="#217346"/><rect x="97.3" y="9" width="3.7" height="14.8" fill="#217346"/><rect x="102.7" y="11.2" width="3.8" height="12.6" fill="#217346"/>
</svg>
<svg style="left:510px;top:180px" width="182" height="8"><path d="M2 5.5 H95 L100 0.5 L105 5.5 H180" fill="none" stroke="#c8c8c8"/></svg>
<svg style="left:516px;top:192px" width="7" height="7"><path d="M6 0.5 V6 H0.5 Z" fill="#444"/></svg>
<div class="t" style="left:527.40px;top:192.20px;font-size:9.0px;color:#217346;font-weight:700;transform:scaleX(0.945);transform-origin:0 0">Options d’étiquette</div>
<div class="t" style="left:527.90px;top:207.80px;font-size:8.5px;color:#262626;font-weight:400;">Texte de l'étiquette</div>
<div class="a" style="left:534.70px;top:222.10px;width:9.30px;height:9.30px;background:#fff;border:1px solid #ababab"></div>
<div class="t" style="left:547.30px;top:223.70px;font-size:8.5px;color:#262626;font-weight:400;"><u>V</u>aleur à partir des cellules</div>
<div class="a" style="left:534.70px;top:239.88px;width:9.30px;height:9.30px;background:#fff;border:1px solid #ababab"></div>
<div class="t" style="left:547.30px;top:241.48px;font-size:8.5px;color:#262626;font-weight:400;">Nom de <u>s</u>érie</div>
<div class="a" style="left:534.70px;top:257.66px;width:9.30px;height:9.30px;background:#fff;border:1px solid #ababab"></div>
<div class="t" style="left:547.30px;top:259.26px;font-size:8.5px;color:#262626;font-weight:400;">Nom de caté<u>g</u>orie</div>
<div class="a" style="left:534.70px;top:275.44px;width:9.30px;height:9.30px;background:#fff;border:1px solid #ababab"></div>
<svg style="left:534.7px;top:275.44px" width="10" height="10"><path d="M2 5 L4 7.2 L8 2.5" fill="none" stroke="#333" stroke-width="0.9"/></svg>
<div class="t" style="left:547.30px;top:277.04px;font-size:8.5px;color:#262626;font-weight:400;"><u>V</u>aleur</div>
<div class="a" style="left:534.70px;top:293.22px;width:9.30px;height:9.30px;background:#fff;border:1px solid #ababab"></div>
<svg style="left:534.7px;top:293.22px" width="10" height="10"><path d="M2 5 L4 7.2 L8 2.5" fill="none" stroke="#333" stroke-width="0.9"/></svg>
<div class="t" style="left:547.30px;top:294.82px;font-size:8.5px;color:#262626;font-weight:400;"><u>A</u>fficher les lignes d'étiquettes</div>
<div class="a" style="left:534.70px;top:311.00px;width:9.30px;height:9.30px;background:#fff;border:1px solid #ababab"></div>
<div class="t" style="left:547.30px;top:312.60px;font-size:8.5px;color:#262626;font-weight:400;">Sym<u>b</u>ole de légende</div>
<div class="t" style="left:534.60px;top:332.42px;font-size:8.6px;color:#262626;font-weight:400;transform:scaleX(0.94);transform-origin:0 0">Sé<u>p</u>arateur</div>
<div class="a" style="left:599.30px;top:328.10px;width:81.40px;height:14.80px;background:#fff;border:1px solid #b4b4b4"></div>
<div class="t" style="left:604.00px;top:332.20px;font-size:8.5px;color:#262626;font-weight:400;">;</div>
<svg style="left:670px;top:334px" width="7" height="5"><path d="M0.5 0.5 h6 l-3 3.5z" fill="#444"/></svg>
<div class="a" style="left:535.30px;top:347.30px;width:126.40px;height:17.20px;background:#fdfdfd;border:1px solid #adadad"></div>
<div class="t" style="left:540.80px;top:352.48px;font-size:8.53px;color:#262626;font-weight:400;">Redéfini<u>r</u> le texte de l'étiquette</div>
<div class="t" style="left:527.60px;top:371.62px;font-size:8.6px;color:#262626;font-weight:400;">Position de l'étiquette</div>
<svg style="left:534px;top:390.20px" width="11" height="11"><circle cx="5.5" cy="5.5" r="4.2" fill="#fff" stroke="#a6a6a6"/></svg>
<div class="t" style="left:547.30px;top:392.02px;font-size:8.6px;color:#262626;font-weight:400;"><u>C</u>entre</div>
<svg style="left:534px;top:405.70px" width="11" height="11"><circle cx="5.5" cy="5.5" r="4.2" fill="#fff" stroke="#a6a6a6"/><circle cx="5.5" cy="5.5" r="1.8" fill="#333"/></svg>
<div class="t" style="left:547.30px;top:407.52px;font-size:8.6px;color:#262626;font-weight:400;"><u>B</u>ord intérieur</div>
<svg style="left:534px;top:421.70px" width="11" height="11"><circle cx="5.5" cy="5.5" r="4.2" fill="#fff" stroke="#a6a6a6"/></svg>
<div class="t" style="left:547.30px;top:423.52px;font-size:8.6px;color:#262626;font-weight:400;">I<u>n</u>térieur base</div>
<svg style="left:534px;top:437.50px" width="11" height="11"><circle cx="5.5" cy="5.5" r="4.2" fill="#fff" stroke="#a6a6a6"/></svg>
<div class="t" style="left:547.30px;top:439.32px;font-size:8.6px;color:#262626;font-weight:400;">B<u>o</u>rd extérieur</div>
<svg style="left:517px;top:462px" width="6" height="8"><path d="M0.5 0.5 L5 4 L0.5 7.5Z" fill="none" stroke="#666"/></svg>
<div class="t" style="left:527.60px;top:462.80px;font-size:9.0px;color:#262626;font-weight:700;transform:scaleX(0.945);transform-origin:0 0">Nombre</div>
<svg style="left:0;top:0" width="700" height="484"><path d="M238.26 117.87 L149.47 28.05 L154.20 23.37 L132.50 16.00 L139.62 37.79 L144.35 33.11 L233.14 122.93Z" fill="#ff8200"/></svg>
<svg style="left:0;top:0" width="700" height="484"><path d="M664.97 85.97 L624.61 140.22 L619.51 136.43 L615.50 159.00 L635.96 148.67 L630.87 144.88 L671.23 90.63Z" fill="#ff8200"/></svg>
<svg style="left:0;top:0" width="700" height="484"><path d="M674.18 276.90 L604.08 277.20 L604.06 271.65 L581.60 281.50 L604.14 291.15 L604.12 285.60 L674.22 285.30Z" fill="#ff8200"/></svg>
</body></html>
